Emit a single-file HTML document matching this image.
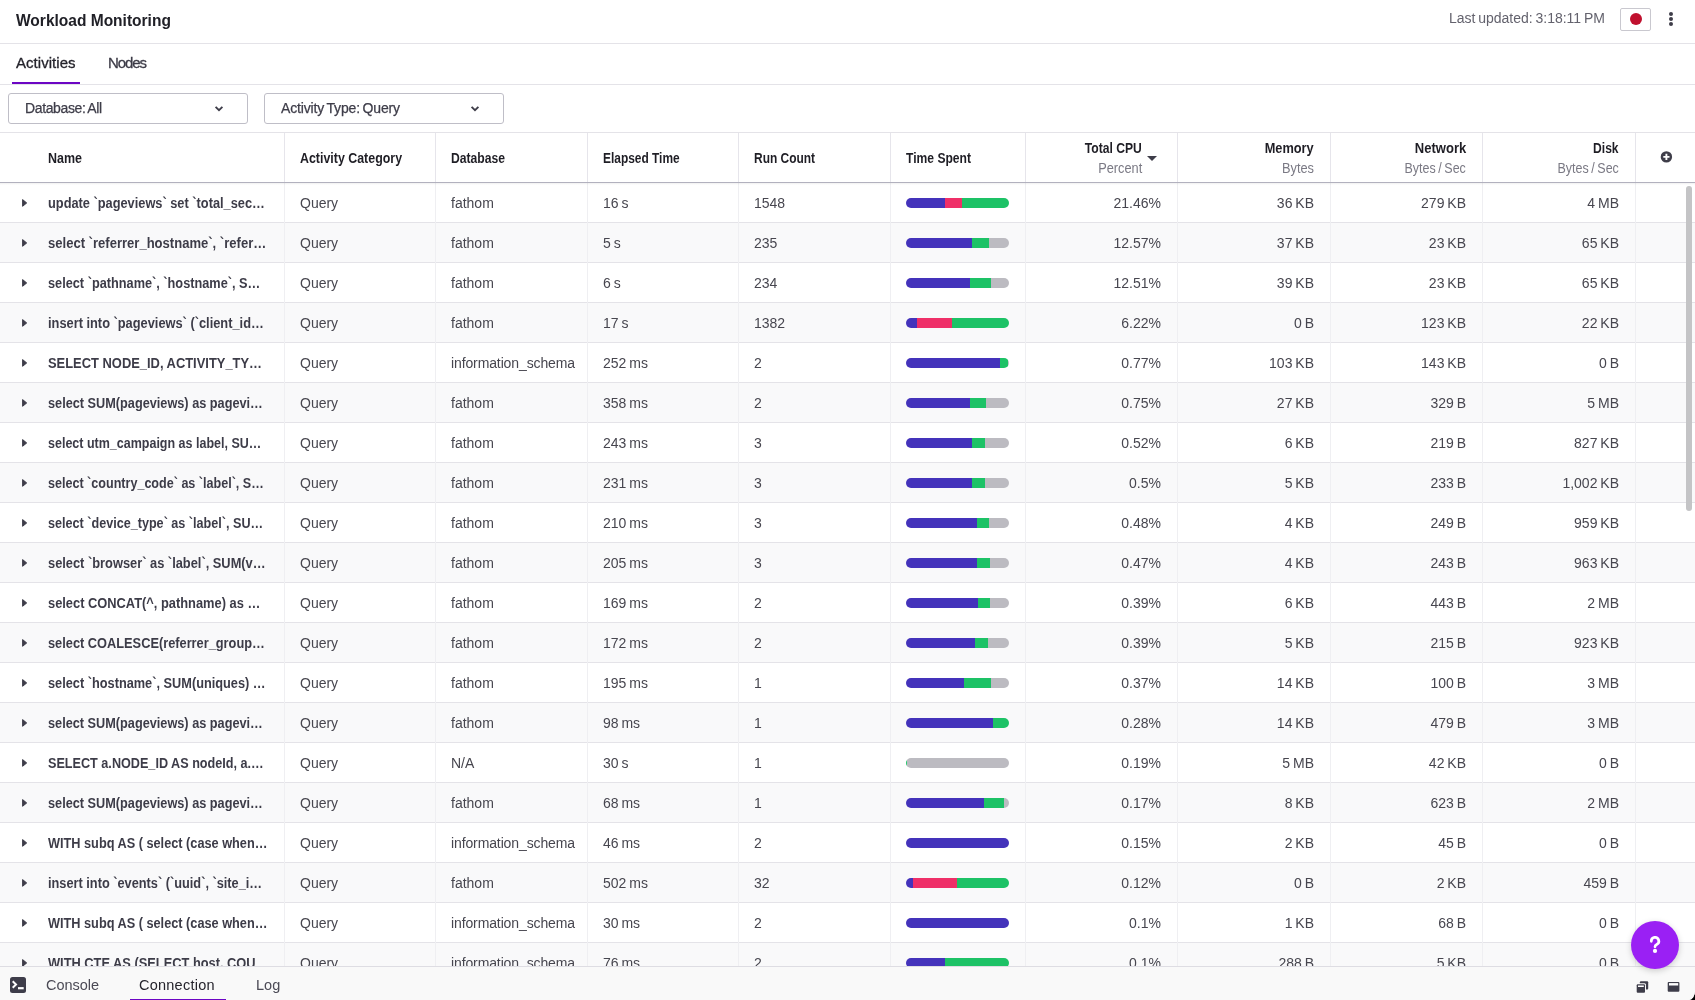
<!DOCTYPE html>
<html><head><meta charset="utf-8"><title>Workload Monitoring</title>
<style>
html,body{margin:0;padding:0}
body{width:1695px;height:1000px;overflow:hidden;background:#000;position:relative;font-family:"Liberation Sans",sans-serif}
.t{position:absolute;white-space:nowrap}
.d{word-spacing:-1px}
.row{position:absolute;left:0;width:1695px;height:40px}
.hl{position:absolute;left:0;width:1695px;height:1px;background:#e4e3e8}
.vl{position:absolute;width:1px}
.arr{position:absolute;left:22px}
.bar{position:absolute;left:906px;width:103px;height:10px;border-radius:5px;overflow:hidden}
#tbl{position:absolute;left:0;top:0;width:1695px;height:966px;overflow:hidden}
</style></head><body>
<div id="root" style="position:absolute;left:0;top:0;width:1695px;height:1000px;overflow:hidden;will-change:transform;border-bottom-right-radius:6px 9px;background:#fff">
<div style="position:absolute;left:0;top:43px;width:1695px;height:1px;background:#e4e3e8"></div>
<div style="position:absolute;left:1620px;top:8px;width:29px;height:21px;border:1px solid #c9c8cf;border-radius:2px"></div>
<div style="position:absolute;left:1629.5px;top:13px;width:12px;height:12px;border-radius:50%;background:#c0102e"></div>
<div style="position:absolute;left:1669px;top:12px;width:4px;height:4px;border-radius:50%;background:#3e3d49"></div>
<div style="position:absolute;left:1669px;top:17px;width:4px;height:4px;border-radius:50%;background:#3e3d49"></div>
<div style="position:absolute;left:1669px;top:22px;width:4px;height:4px;border-radius:50%;background:#3e3d49"></div>
<div style="position:absolute;left:0;top:84px;width:1695px;height:1px;background:#e4e3e8"></div>
<div style="position:absolute;left:12px;top:82px;width:68px;height:2px;background:#6c06c4"></div>
<div style="position:absolute;left:8px;top:93px;width:238px;height:29px;border:1px solid #bfbec7;border-radius:3px"></div>
<div style="position:absolute;left:264px;top:93px;width:238px;height:29px;border:1px solid #bfbec7;border-radius:3px"></div>
<svg style="position:absolute;left:214px;top:104px" width="10" height="8" viewBox="0 0 10 8"><path d="M1.6 2.9 L5 6.1 L8.4 2.9" fill="none" stroke="#3e3d49" stroke-width="1.9"/></svg>
<svg style="position:absolute;left:470px;top:104px" width="10" height="8" viewBox="0 0 10 8"><path d="M1.6 2.9 L5 6.1 L8.4 2.9" fill="none" stroke="#3e3d49" stroke-width="1.9"/></svg>
<div id="tbl">
<div style="position:absolute;left:0;top:132px;width:1695px;height:1px;background:#e4e3e8"></div>
<div class="row" style="top:182px;background:#ffffff"></div><div class="row" style="top:222px;background:#f9f9fa"></div><div class="row" style="top:262px;background:#ffffff"></div><div class="row" style="top:302px;background:#f9f9fa"></div><div class="row" style="top:342px;background:#ffffff"></div><div class="row" style="top:382px;background:#f9f9fa"></div><div class="row" style="top:422px;background:#ffffff"></div><div class="row" style="top:462px;background:#f9f9fa"></div><div class="row" style="top:502px;background:#ffffff"></div><div class="row" style="top:542px;background:#f9f9fa"></div><div class="row" style="top:582px;background:#ffffff"></div><div class="row" style="top:622px;background:#f9f9fa"></div><div class="row" style="top:662px;background:#ffffff"></div><div class="row" style="top:702px;background:#f9f9fa"></div><div class="row" style="top:742px;background:#ffffff"></div><div class="row" style="top:782px;background:#f9f9fa"></div><div class="row" style="top:822px;background:#ffffff"></div><div class="row" style="top:862px;background:#f9f9fa"></div><div class="row" style="top:902px;background:#ffffff"></div><div class="row" style="top:942px;background:#f9f9fa"></div><div class="hl" style="top:222px"></div><div class="hl" style="top:262px"></div><div class="hl" style="top:302px"></div><div class="hl" style="top:342px"></div><div class="hl" style="top:382px"></div><div class="hl" style="top:422px"></div><div class="hl" style="top:462px"></div><div class="hl" style="top:502px"></div><div class="hl" style="top:542px"></div><div class="hl" style="top:582px"></div><div class="hl" style="top:622px"></div><div class="hl" style="top:662px"></div><div class="hl" style="top:702px"></div><div class="hl" style="top:742px"></div><div class="hl" style="top:782px"></div><div class="hl" style="top:822px"></div><div class="hl" style="top:862px"></div><div class="hl" style="top:902px"></div><div class="hl" style="top:942px"></div><div class="hl" style="top:982px"></div><div class="vl" style="left:284px;top:183px;height:783px;background:#efeff2"></div><div class="vl" style="left:284px;top:133px;height:49px;background:#e6e5eb"></div><div class="vl" style="left:435px;top:183px;height:783px;background:#efeff2"></div><div class="vl" style="left:435px;top:133px;height:49px;background:#e6e5eb"></div><div class="vl" style="left:587px;top:183px;height:783px;background:#efeff2"></div><div class="vl" style="left:587px;top:133px;height:49px;background:#e6e5eb"></div><div class="vl" style="left:738px;top:183px;height:783px;background:#efeff2"></div><div class="vl" style="left:738px;top:133px;height:49px;background:#e6e5eb"></div><div class="vl" style="left:890px;top:183px;height:783px;background:#efeff2"></div><div class="vl" style="left:890px;top:133px;height:49px;background:#e6e5eb"></div><div class="vl" style="left:1025px;top:183px;height:783px;background:#efeff2"></div><div class="vl" style="left:1025px;top:133px;height:49px;background:#e6e5eb"></div><div class="vl" style="left:1177px;top:183px;height:783px;background:#efeff2"></div><div class="vl" style="left:1177px;top:133px;height:49px;background:#e6e5eb"></div><div class="vl" style="left:1330px;top:183px;height:783px;background:#efeff2"></div><div class="vl" style="left:1330px;top:133px;height:49px;background:#e6e5eb"></div><div class="vl" style="left:1482px;top:183px;height:783px;background:#efeff2"></div><div class="vl" style="left:1482px;top:133px;height:49px;background:#e6e5eb"></div><div class="vl" style="left:1635px;top:183px;height:783px;background:#efeff2"></div><div class="vl" style="left:1635px;top:133px;height:49px;background:#e6e5eb"></div><svg class="arr" style="top:199px" width="6" height="8" viewBox="0 0 6 8"><path d="M0.6 0.6 L4.7 3.95 L0.6 7.3 Z" fill="#3e3d49" stroke="#3e3d49" stroke-width="1" stroke-linejoin="round"/></svg><div class="bar" style="top:198px"><div style="position:absolute;left:0px;top:0;width:39px;height:10px;background:#4433bb"></div><div style="position:absolute;left:39px;top:0;width:17px;height:10px;background:#ef2f68"></div><div style="position:absolute;left:56px;top:0;width:47px;height:10px;background:#1dc266"></div></div><svg class="arr" style="top:239px" width="6" height="8" viewBox="0 0 6 8"><path d="M0.6 0.6 L4.7 3.95 L0.6 7.3 Z" fill="#3e3d49" stroke="#3e3d49" stroke-width="1" stroke-linejoin="round"/></svg><div class="bar" style="top:238px"><div style="position:absolute;left:0px;top:0;width:66px;height:10px;background:#4433bb"></div><div style="position:absolute;left:66px;top:0;width:17px;height:10px;background:#1dc266"></div><div style="position:absolute;left:83px;top:0;width:20px;height:10px;background:#bcbbc1"></div></div><svg class="arr" style="top:279px" width="6" height="8" viewBox="0 0 6 8"><path d="M0.6 0.6 L4.7 3.95 L0.6 7.3 Z" fill="#3e3d49" stroke="#3e3d49" stroke-width="1" stroke-linejoin="round"/></svg><div class="bar" style="top:278px"><div style="position:absolute;left:0px;top:0;width:64px;height:10px;background:#4433bb"></div><div style="position:absolute;left:64px;top:0;width:21px;height:10px;background:#1dc266"></div><div style="position:absolute;left:85px;top:0;width:18px;height:10px;background:#bcbbc1"></div></div><svg class="arr" style="top:319px" width="6" height="8" viewBox="0 0 6 8"><path d="M0.6 0.6 L4.7 3.95 L0.6 7.3 Z" fill="#3e3d49" stroke="#3e3d49" stroke-width="1" stroke-linejoin="round"/></svg><div class="bar" style="top:318px"><div style="position:absolute;left:0px;top:0;width:11px;height:10px;background:#4433bb"></div><div style="position:absolute;left:11px;top:0;width:35px;height:10px;background:#ef2f68"></div><div style="position:absolute;left:46px;top:0;width:57px;height:10px;background:#1dc266"></div></div><svg class="arr" style="top:359px" width="6" height="8" viewBox="0 0 6 8"><path d="M0.6 0.6 L4.7 3.95 L0.6 7.3 Z" fill="#3e3d49" stroke="#3e3d49" stroke-width="1" stroke-linejoin="round"/></svg><div class="bar" style="top:358px"><div style="position:absolute;left:0px;top:0;width:94px;height:10px;background:#4433bb"></div><div style="position:absolute;left:94px;top:0;width:8px;height:10px;background:#1dc266"></div><div style="position:absolute;left:102px;top:0;width:1px;height:10px;background:#bcbbc1"></div></div><svg class="arr" style="top:399px" width="6" height="8" viewBox="0 0 6 8"><path d="M0.6 0.6 L4.7 3.95 L0.6 7.3 Z" fill="#3e3d49" stroke="#3e3d49" stroke-width="1" stroke-linejoin="round"/></svg><div class="bar" style="top:398px"><div style="position:absolute;left:0px;top:0;width:64px;height:10px;background:#4433bb"></div><div style="position:absolute;left:64px;top:0;width:16px;height:10px;background:#1dc266"></div><div style="position:absolute;left:80px;top:0;width:23px;height:10px;background:#bcbbc1"></div></div><svg class="arr" style="top:439px" width="6" height="8" viewBox="0 0 6 8"><path d="M0.6 0.6 L4.7 3.95 L0.6 7.3 Z" fill="#3e3d49" stroke="#3e3d49" stroke-width="1" stroke-linejoin="round"/></svg><div class="bar" style="top:438px"><div style="position:absolute;left:0px;top:0;width:66px;height:10px;background:#4433bb"></div><div style="position:absolute;left:66px;top:0;width:13px;height:10px;background:#1dc266"></div><div style="position:absolute;left:79px;top:0;width:24px;height:10px;background:#bcbbc1"></div></div><svg class="arr" style="top:479px" width="6" height="8" viewBox="0 0 6 8"><path d="M0.6 0.6 L4.7 3.95 L0.6 7.3 Z" fill="#3e3d49" stroke="#3e3d49" stroke-width="1" stroke-linejoin="round"/></svg><div class="bar" style="top:478px"><div style="position:absolute;left:0px;top:0;width:66px;height:10px;background:#4433bb"></div><div style="position:absolute;left:66px;top:0;width:13px;height:10px;background:#1dc266"></div><div style="position:absolute;left:79px;top:0;width:24px;height:10px;background:#bcbbc1"></div></div><svg class="arr" style="top:519px" width="6" height="8" viewBox="0 0 6 8"><path d="M0.6 0.6 L4.7 3.95 L0.6 7.3 Z" fill="#3e3d49" stroke="#3e3d49" stroke-width="1" stroke-linejoin="round"/></svg><div class="bar" style="top:518px"><div style="position:absolute;left:0px;top:0;width:71px;height:10px;background:#4433bb"></div><div style="position:absolute;left:71px;top:0;width:12px;height:10px;background:#1dc266"></div><div style="position:absolute;left:83px;top:0;width:20px;height:10px;background:#bcbbc1"></div></div><svg class="arr" style="top:559px" width="6" height="8" viewBox="0 0 6 8"><path d="M0.6 0.6 L4.7 3.95 L0.6 7.3 Z" fill="#3e3d49" stroke="#3e3d49" stroke-width="1" stroke-linejoin="round"/></svg><div class="bar" style="top:558px"><div style="position:absolute;left:0px;top:0;width:71px;height:10px;background:#4433bb"></div><div style="position:absolute;left:71px;top:0;width:13px;height:10px;background:#1dc266"></div><div style="position:absolute;left:84px;top:0;width:19px;height:10px;background:#bcbbc1"></div></div><svg class="arr" style="top:599px" width="6" height="8" viewBox="0 0 6 8"><path d="M0.6 0.6 L4.7 3.95 L0.6 7.3 Z" fill="#3e3d49" stroke="#3e3d49" stroke-width="1" stroke-linejoin="round"/></svg><div class="bar" style="top:598px"><div style="position:absolute;left:0px;top:0;width:72px;height:10px;background:#4433bb"></div><div style="position:absolute;left:72px;top:0;width:12px;height:10px;background:#1dc266"></div><div style="position:absolute;left:84px;top:0;width:19px;height:10px;background:#bcbbc1"></div></div><svg class="arr" style="top:639px" width="6" height="8" viewBox="0 0 6 8"><path d="M0.6 0.6 L4.7 3.95 L0.6 7.3 Z" fill="#3e3d49" stroke="#3e3d49" stroke-width="1" stroke-linejoin="round"/></svg><div class="bar" style="top:638px"><div style="position:absolute;left:0px;top:0;width:69px;height:10px;background:#4433bb"></div><div style="position:absolute;left:69px;top:0;width:13px;height:10px;background:#1dc266"></div><div style="position:absolute;left:82px;top:0;width:21px;height:10px;background:#bcbbc1"></div></div><svg class="arr" style="top:679px" width="6" height="8" viewBox="0 0 6 8"><path d="M0.6 0.6 L4.7 3.95 L0.6 7.3 Z" fill="#3e3d49" stroke="#3e3d49" stroke-width="1" stroke-linejoin="round"/></svg><div class="bar" style="top:678px"><div style="position:absolute;left:0px;top:0;width:58px;height:10px;background:#4433bb"></div><div style="position:absolute;left:58px;top:0;width:27px;height:10px;background:#1dc266"></div><div style="position:absolute;left:85px;top:0;width:18px;height:10px;background:#bcbbc1"></div></div><svg class="arr" style="top:719px" width="6" height="8" viewBox="0 0 6 8"><path d="M0.6 0.6 L4.7 3.95 L0.6 7.3 Z" fill="#3e3d49" stroke="#3e3d49" stroke-width="1" stroke-linejoin="round"/></svg><div class="bar" style="top:718px"><div style="position:absolute;left:0px;top:0;width:87px;height:10px;background:#4433bb"></div><div style="position:absolute;left:87px;top:0;width:16px;height:10px;background:#1dc266"></div></div><svg class="arr" style="top:759px" width="6" height="8" viewBox="0 0 6 8"><path d="M0.6 0.6 L4.7 3.95 L0.6 7.3 Z" fill="#3e3d49" stroke="#3e3d49" stroke-width="1" stroke-linejoin="round"/></svg><div class="bar" style="top:758px"><div style="position:absolute;left:0px;top:0;width:1px;height:10px;background:#1dc266"></div><div style="position:absolute;left:1px;top:0;width:102px;height:10px;background:#bcbbc1"></div></div><svg class="arr" style="top:799px" width="6" height="8" viewBox="0 0 6 8"><path d="M0.6 0.6 L4.7 3.95 L0.6 7.3 Z" fill="#3e3d49" stroke="#3e3d49" stroke-width="1" stroke-linejoin="round"/></svg><div class="bar" style="top:798px"><div style="position:absolute;left:0px;top:0;width:78px;height:10px;background:#4433bb"></div><div style="position:absolute;left:78px;top:0;width:20px;height:10px;background:#1dc266"></div><div style="position:absolute;left:98px;top:0;width:5px;height:10px;background:#bcbbc1"></div></div><svg class="arr" style="top:839px" width="6" height="8" viewBox="0 0 6 8"><path d="M0.6 0.6 L4.7 3.95 L0.6 7.3 Z" fill="#3e3d49" stroke="#3e3d49" stroke-width="1" stroke-linejoin="round"/></svg><div class="bar" style="top:838px"><div style="position:absolute;left:0px;top:0;width:103px;height:10px;background:#4433bb"></div></div><svg class="arr" style="top:879px" width="6" height="8" viewBox="0 0 6 8"><path d="M0.6 0.6 L4.7 3.95 L0.6 7.3 Z" fill="#3e3d49" stroke="#3e3d49" stroke-width="1" stroke-linejoin="round"/></svg><div class="bar" style="top:878px"><div style="position:absolute;left:0px;top:0;width:7px;height:10px;background:#4433bb"></div><div style="position:absolute;left:7px;top:0;width:44px;height:10px;background:#ef2f68"></div><div style="position:absolute;left:51px;top:0;width:52px;height:10px;background:#1dc266"></div></div><svg class="arr" style="top:919px" width="6" height="8" viewBox="0 0 6 8"><path d="M0.6 0.6 L4.7 3.95 L0.6 7.3 Z" fill="#3e3d49" stroke="#3e3d49" stroke-width="1" stroke-linejoin="round"/></svg><div class="bar" style="top:918px"><div style="position:absolute;left:0px;top:0;width:103px;height:10px;background:#4433bb"></div></div><svg class="arr" style="top:959px" width="6" height="8" viewBox="0 0 6 8"><path d="M0.6 0.6 L4.7 3.95 L0.6 7.3 Z" fill="#3e3d49" stroke="#3e3d49" stroke-width="1" stroke-linejoin="round"/></svg><div class="bar" style="top:958px"><div style="position:absolute;left:0px;top:0;width:39px;height:10px;background:#4433bb"></div><div style="position:absolute;left:39px;top:0;width:64px;height:10px;background:#1dc266"></div></div>
<div class="t" style="top:196.15px;font-size:14px;line-height:14px;color:#3d3c48;font-weight:bold;transform:scaleX(0.9137);transform-origin:0 0;left:48px;">update `pageviews` set `total_sec…</div>
<div class="t d" style="top:196.15px;font-size:14px;line-height:14px;color:#47464f;left:300px;">Query</div>
<div class="t d" style="top:196.15px;font-size:14px;line-height:14px;color:#47464f;left:451px;">fathom</div>
<div class="t d" style="top:196.15px;font-size:14px;line-height:14px;color:#47464f;left:603px;">16 s</div>
<div class="t d" style="top:196.15px;font-size:14px;line-height:14px;color:#47464f;left:754px;">1548</div>
<div class="t d" style="top:196.15px;font-size:14px;line-height:14px;color:#47464f;right:534.00px;text-align:right;">21.46%</div>
<div class="t d" style="top:196.15px;font-size:14px;line-height:14px;color:#47464f;right:381.00px;text-align:right;">36 KB</div>
<div class="t d" style="top:196.15px;font-size:14px;line-height:14px;color:#47464f;right:229.00px;text-align:right;">279 KB</div>
<div class="t d" style="top:196.15px;font-size:14px;line-height:14px;color:#47464f;right:76.00px;text-align:right;">4 MB</div>
<div class="t" style="top:236.15px;font-size:14px;line-height:14px;color:#3d3c48;font-weight:bold;transform:scaleX(0.9320);transform-origin:0 0;left:48px;">select `referrer_hostname`, `refer…</div>
<div class="t d" style="top:236.15px;font-size:14px;line-height:14px;color:#47464f;left:300px;">Query</div>
<div class="t d" style="top:236.15px;font-size:14px;line-height:14px;color:#47464f;left:451px;">fathom</div>
<div class="t d" style="top:236.15px;font-size:14px;line-height:14px;color:#47464f;left:603px;">5 s</div>
<div class="t d" style="top:236.15px;font-size:14px;line-height:14px;color:#47464f;left:754px;">235</div>
<div class="t d" style="top:236.15px;font-size:14px;line-height:14px;color:#47464f;right:534.00px;text-align:right;">12.57%</div>
<div class="t d" style="top:236.15px;font-size:14px;line-height:14px;color:#47464f;right:381.00px;text-align:right;">37 KB</div>
<div class="t d" style="top:236.15px;font-size:14px;line-height:14px;color:#47464f;right:229.00px;text-align:right;">23 KB</div>
<div class="t d" style="top:236.15px;font-size:14px;line-height:14px;color:#47464f;right:76.00px;text-align:right;">65 KB</div>
<div class="t" style="top:276.15px;font-size:14px;line-height:14px;color:#3d3c48;font-weight:bold;transform:scaleX(0.9096);transform-origin:0 0;left:48px;">select `pathname`, `hostname`, S…</div>
<div class="t d" style="top:276.15px;font-size:14px;line-height:14px;color:#47464f;left:300px;">Query</div>
<div class="t d" style="top:276.15px;font-size:14px;line-height:14px;color:#47464f;left:451px;">fathom</div>
<div class="t d" style="top:276.15px;font-size:14px;line-height:14px;color:#47464f;left:603px;">6 s</div>
<div class="t d" style="top:276.15px;font-size:14px;line-height:14px;color:#47464f;left:754px;">234</div>
<div class="t d" style="top:276.15px;font-size:14px;line-height:14px;color:#47464f;right:534.00px;text-align:right;">12.51%</div>
<div class="t d" style="top:276.15px;font-size:14px;line-height:14px;color:#47464f;right:381.00px;text-align:right;">39 KB</div>
<div class="t d" style="top:276.15px;font-size:14px;line-height:14px;color:#47464f;right:229.00px;text-align:right;">23 KB</div>
<div class="t d" style="top:276.15px;font-size:14px;line-height:14px;color:#47464f;right:76.00px;text-align:right;">65 KB</div>
<div class="t" style="top:316.15px;font-size:14px;line-height:14px;color:#3d3c48;font-weight:bold;transform:scaleX(0.9156);transform-origin:0 0;left:48px;">insert into `pageviews` (`client_id…</div>
<div class="t d" style="top:316.15px;font-size:14px;line-height:14px;color:#47464f;left:300px;">Query</div>
<div class="t d" style="top:316.15px;font-size:14px;line-height:14px;color:#47464f;left:451px;">fathom</div>
<div class="t d" style="top:316.15px;font-size:14px;line-height:14px;color:#47464f;left:603px;">17 s</div>
<div class="t d" style="top:316.15px;font-size:14px;line-height:14px;color:#47464f;left:754px;">1382</div>
<div class="t d" style="top:316.15px;font-size:14px;line-height:14px;color:#47464f;right:534.00px;text-align:right;">6.22%</div>
<div class="t d" style="top:316.15px;font-size:14px;line-height:14px;color:#47464f;right:381.00px;text-align:right;">0 B</div>
<div class="t d" style="top:316.15px;font-size:14px;line-height:14px;color:#47464f;right:229.00px;text-align:right;">123 KB</div>
<div class="t d" style="top:316.15px;font-size:14px;line-height:14px;color:#47464f;right:76.00px;text-align:right;">22 KB</div>
<div class="t" style="top:356.15px;font-size:14px;line-height:14px;color:#3d3c48;font-weight:bold;transform:scaleX(0.9221);transform-origin:0 0;left:48px;">SELECT NODE_ID, ACTIVITY_TY…</div>
<div class="t d" style="top:356.15px;font-size:14px;line-height:14px;color:#47464f;left:300px;">Query</div>
<div class="t d" style="top:356.15px;font-size:14px;line-height:14px;color:#47464f;letter-spacing:-0.118px;left:451px;">information_schema</div>
<div class="t d" style="top:356.15px;font-size:14px;line-height:14px;color:#47464f;left:603px;">252 ms</div>
<div class="t d" style="top:356.15px;font-size:14px;line-height:14px;color:#47464f;left:754px;">2</div>
<div class="t d" style="top:356.15px;font-size:14px;line-height:14px;color:#47464f;right:534.00px;text-align:right;">0.77%</div>
<div class="t d" style="top:356.15px;font-size:14px;line-height:14px;color:#47464f;right:381.00px;text-align:right;">103 KB</div>
<div class="t d" style="top:356.15px;font-size:14px;line-height:14px;color:#47464f;right:229.00px;text-align:right;">143 KB</div>
<div class="t d" style="top:356.15px;font-size:14px;line-height:14px;color:#47464f;right:76.00px;text-align:right;">0 B</div>
<div class="t" style="top:396.15px;font-size:14px;line-height:14px;color:#3d3c48;font-weight:bold;transform:scaleX(0.9081);transform-origin:0 0;left:48px;">select SUM(pageviews) as pagevi…</div>
<div class="t d" style="top:396.15px;font-size:14px;line-height:14px;color:#47464f;left:300px;">Query</div>
<div class="t d" style="top:396.15px;font-size:14px;line-height:14px;color:#47464f;left:451px;">fathom</div>
<div class="t d" style="top:396.15px;font-size:14px;line-height:14px;color:#47464f;left:603px;">358 ms</div>
<div class="t d" style="top:396.15px;font-size:14px;line-height:14px;color:#47464f;left:754px;">2</div>
<div class="t d" style="top:396.15px;font-size:14px;line-height:14px;color:#47464f;right:534.00px;text-align:right;">0.75%</div>
<div class="t d" style="top:396.15px;font-size:14px;line-height:14px;color:#47464f;right:381.00px;text-align:right;">27 KB</div>
<div class="t d" style="top:396.15px;font-size:14px;line-height:14px;color:#47464f;right:229.00px;text-align:right;">329 B</div>
<div class="t d" style="top:396.15px;font-size:14px;line-height:14px;color:#47464f;right:76.00px;text-align:right;">5 MB</div>
<div class="t" style="top:436.15px;font-size:14px;line-height:14px;color:#3d3c48;font-weight:bold;transform:scaleX(0.8928);transform-origin:0 0;left:48px;">select utm_campaign as label, SU…</div>
<div class="t d" style="top:436.15px;font-size:14px;line-height:14px;color:#47464f;left:300px;">Query</div>
<div class="t d" style="top:436.15px;font-size:14px;line-height:14px;color:#47464f;left:451px;">fathom</div>
<div class="t d" style="top:436.15px;font-size:14px;line-height:14px;color:#47464f;left:603px;">243 ms</div>
<div class="t d" style="top:436.15px;font-size:14px;line-height:14px;color:#47464f;left:754px;">3</div>
<div class="t d" style="top:436.15px;font-size:14px;line-height:14px;color:#47464f;right:534.00px;text-align:right;">0.52%</div>
<div class="t d" style="top:436.15px;font-size:14px;line-height:14px;color:#47464f;right:381.00px;text-align:right;">6 KB</div>
<div class="t d" style="top:436.15px;font-size:14px;line-height:14px;color:#47464f;right:229.00px;text-align:right;">219 B</div>
<div class="t d" style="top:436.15px;font-size:14px;line-height:14px;color:#47464f;right:76.00px;text-align:right;">827 KB</div>
<div class="t" style="top:476.15px;font-size:14px;line-height:14px;color:#3d3c48;font-weight:bold;transform:scaleX(0.8976);transform-origin:0 0;left:48px;">select `country_code` as `label`, S…</div>
<div class="t d" style="top:476.15px;font-size:14px;line-height:14px;color:#47464f;left:300px;">Query</div>
<div class="t d" style="top:476.15px;font-size:14px;line-height:14px;color:#47464f;left:451px;">fathom</div>
<div class="t d" style="top:476.15px;font-size:14px;line-height:14px;color:#47464f;left:603px;">231 ms</div>
<div class="t d" style="top:476.15px;font-size:14px;line-height:14px;color:#47464f;left:754px;">3</div>
<div class="t d" style="top:476.15px;font-size:14px;line-height:14px;color:#47464f;right:534.00px;text-align:right;">0.5%</div>
<div class="t d" style="top:476.15px;font-size:14px;line-height:14px;color:#47464f;right:381.00px;text-align:right;">5 KB</div>
<div class="t d" style="top:476.15px;font-size:14px;line-height:14px;color:#47464f;right:229.00px;text-align:right;">233 B</div>
<div class="t d" style="top:476.15px;font-size:14px;line-height:14px;color:#47464f;right:76.00px;text-align:right;">1,002 KB</div>
<div class="t" style="top:516.15px;font-size:14px;line-height:14px;color:#3d3c48;font-weight:bold;transform:scaleX(0.9005);transform-origin:0 0;left:48px;">select `device_type` as `label`, SU…</div>
<div class="t d" style="top:516.15px;font-size:14px;line-height:14px;color:#47464f;left:300px;">Query</div>
<div class="t d" style="top:516.15px;font-size:14px;line-height:14px;color:#47464f;left:451px;">fathom</div>
<div class="t d" style="top:516.15px;font-size:14px;line-height:14px;color:#47464f;left:603px;">210 ms</div>
<div class="t d" style="top:516.15px;font-size:14px;line-height:14px;color:#47464f;left:754px;">3</div>
<div class="t d" style="top:516.15px;font-size:14px;line-height:14px;color:#47464f;right:534.00px;text-align:right;">0.48%</div>
<div class="t d" style="top:516.15px;font-size:14px;line-height:14px;color:#47464f;right:381.00px;text-align:right;">4 KB</div>
<div class="t d" style="top:516.15px;font-size:14px;line-height:14px;color:#47464f;right:229.00px;text-align:right;">249 B</div>
<div class="t d" style="top:516.15px;font-size:14px;line-height:14px;color:#47464f;right:76.00px;text-align:right;">959 KB</div>
<div class="t" style="top:556.15px;font-size:14px;line-height:14px;color:#3d3c48;font-weight:bold;transform:scaleX(0.9169);transform-origin:0 0;left:48px;">select `browser` as `label`, SUM(v…</div>
<div class="t d" style="top:556.15px;font-size:14px;line-height:14px;color:#47464f;left:300px;">Query</div>
<div class="t d" style="top:556.15px;font-size:14px;line-height:14px;color:#47464f;left:451px;">fathom</div>
<div class="t d" style="top:556.15px;font-size:14px;line-height:14px;color:#47464f;left:603px;">205 ms</div>
<div class="t d" style="top:556.15px;font-size:14px;line-height:14px;color:#47464f;left:754px;">3</div>
<div class="t d" style="top:556.15px;font-size:14px;line-height:14px;color:#47464f;right:534.00px;text-align:right;">0.47%</div>
<div class="t d" style="top:556.15px;font-size:14px;line-height:14px;color:#47464f;right:381.00px;text-align:right;">4 KB</div>
<div class="t d" style="top:556.15px;font-size:14px;line-height:14px;color:#47464f;right:229.00px;text-align:right;">243 B</div>
<div class="t d" style="top:556.15px;font-size:14px;line-height:14px;color:#47464f;right:76.00px;text-align:right;">963 KB</div>
<div class="t" style="top:596.15px;font-size:14px;line-height:14px;color:#3d3c48;font-weight:bold;transform:scaleX(0.9182);transform-origin:0 0;left:48px;">select CONCAT(^, pathname) as …</div>
<div class="t d" style="top:596.15px;font-size:14px;line-height:14px;color:#47464f;left:300px;">Query</div>
<div class="t d" style="top:596.15px;font-size:14px;line-height:14px;color:#47464f;left:451px;">fathom</div>
<div class="t d" style="top:596.15px;font-size:14px;line-height:14px;color:#47464f;left:603px;">169 ms</div>
<div class="t d" style="top:596.15px;font-size:14px;line-height:14px;color:#47464f;left:754px;">2</div>
<div class="t d" style="top:596.15px;font-size:14px;line-height:14px;color:#47464f;right:534.00px;text-align:right;">0.39%</div>
<div class="t d" style="top:596.15px;font-size:14px;line-height:14px;color:#47464f;right:381.00px;text-align:right;">6 KB</div>
<div class="t d" style="top:596.15px;font-size:14px;line-height:14px;color:#47464f;right:229.00px;text-align:right;">443 B</div>
<div class="t d" style="top:596.15px;font-size:14px;line-height:14px;color:#47464f;right:76.00px;text-align:right;">2 MB</div>
<div class="t" style="top:636.15px;font-size:14px;line-height:14px;color:#3d3c48;font-weight:bold;transform:scaleX(0.9138);transform-origin:0 0;left:48px;">select COALESCE(referrer_group…</div>
<div class="t d" style="top:636.15px;font-size:14px;line-height:14px;color:#47464f;left:300px;">Query</div>
<div class="t d" style="top:636.15px;font-size:14px;line-height:14px;color:#47464f;left:451px;">fathom</div>
<div class="t d" style="top:636.15px;font-size:14px;line-height:14px;color:#47464f;left:603px;">172 ms</div>
<div class="t d" style="top:636.15px;font-size:14px;line-height:14px;color:#47464f;left:754px;">2</div>
<div class="t d" style="top:636.15px;font-size:14px;line-height:14px;color:#47464f;right:534.00px;text-align:right;">0.39%</div>
<div class="t d" style="top:636.15px;font-size:14px;line-height:14px;color:#47464f;right:381.00px;text-align:right;">5 KB</div>
<div class="t d" style="top:636.15px;font-size:14px;line-height:14px;color:#47464f;right:229.00px;text-align:right;">215 B</div>
<div class="t d" style="top:636.15px;font-size:14px;line-height:14px;color:#47464f;right:76.00px;text-align:right;">923 KB</div>
<div class="t" style="top:676.15px;font-size:14px;line-height:14px;color:#3d3c48;font-weight:bold;transform:scaleX(0.9112);transform-origin:0 0;left:48px;">select `hostname`, SUM(uniques) …</div>
<div class="t d" style="top:676.15px;font-size:14px;line-height:14px;color:#47464f;left:300px;">Query</div>
<div class="t d" style="top:676.15px;font-size:14px;line-height:14px;color:#47464f;left:451px;">fathom</div>
<div class="t d" style="top:676.15px;font-size:14px;line-height:14px;color:#47464f;left:603px;">195 ms</div>
<div class="t d" style="top:676.15px;font-size:14px;line-height:14px;color:#47464f;left:754px;">1</div>
<div class="t d" style="top:676.15px;font-size:14px;line-height:14px;color:#47464f;right:534.00px;text-align:right;">0.37%</div>
<div class="t d" style="top:676.15px;font-size:14px;line-height:14px;color:#47464f;right:381.00px;text-align:right;">14 KB</div>
<div class="t d" style="top:676.15px;font-size:14px;line-height:14px;color:#47464f;right:229.00px;text-align:right;">100 B</div>
<div class="t d" style="top:676.15px;font-size:14px;line-height:14px;color:#47464f;right:76.00px;text-align:right;">3 MB</div>
<div class="t" style="top:716.15px;font-size:14px;line-height:14px;color:#3d3c48;font-weight:bold;transform:scaleX(0.9081);transform-origin:0 0;left:48px;">select SUM(pageviews) as pagevi…</div>
<div class="t d" style="top:716.15px;font-size:14px;line-height:14px;color:#47464f;left:300px;">Query</div>
<div class="t d" style="top:716.15px;font-size:14px;line-height:14px;color:#47464f;left:451px;">fathom</div>
<div class="t d" style="top:716.15px;font-size:14px;line-height:14px;color:#47464f;left:603px;">98 ms</div>
<div class="t d" style="top:716.15px;font-size:14px;line-height:14px;color:#47464f;left:754px;">1</div>
<div class="t d" style="top:716.15px;font-size:14px;line-height:14px;color:#47464f;right:534.00px;text-align:right;">0.28%</div>
<div class="t d" style="top:716.15px;font-size:14px;line-height:14px;color:#47464f;right:381.00px;text-align:right;">14 KB</div>
<div class="t d" style="top:716.15px;font-size:14px;line-height:14px;color:#47464f;right:229.00px;text-align:right;">479 B</div>
<div class="t d" style="top:716.15px;font-size:14px;line-height:14px;color:#47464f;right:76.00px;text-align:right;">3 MB</div>
<div class="t" style="top:756.15px;font-size:14px;line-height:14px;color:#3d3c48;font-weight:bold;transform:scaleX(0.9023);transform-origin:0 0;left:48px;">SELECT a.NODE_ID AS nodeId, a.…</div>
<div class="t d" style="top:756.15px;font-size:14px;line-height:14px;color:#47464f;left:300px;">Query</div>
<div class="t d" style="top:756.15px;font-size:14px;line-height:14px;color:#47464f;left:451px;">N/A</div>
<div class="t d" style="top:756.15px;font-size:14px;line-height:14px;color:#47464f;left:603px;">30 s</div>
<div class="t d" style="top:756.15px;font-size:14px;line-height:14px;color:#47464f;left:754px;">1</div>
<div class="t d" style="top:756.15px;font-size:14px;line-height:14px;color:#47464f;right:534.00px;text-align:right;">0.19%</div>
<div class="t d" style="top:756.15px;font-size:14px;line-height:14px;color:#47464f;right:381.00px;text-align:right;">5 MB</div>
<div class="t d" style="top:756.15px;font-size:14px;line-height:14px;color:#47464f;right:229.00px;text-align:right;">42 KB</div>
<div class="t d" style="top:756.15px;font-size:14px;line-height:14px;color:#47464f;right:76.00px;text-align:right;">0 B</div>
<div class="t" style="top:796.15px;font-size:14px;line-height:14px;color:#3d3c48;font-weight:bold;transform:scaleX(0.9081);transform-origin:0 0;left:48px;">select SUM(pageviews) as pagevi…</div>
<div class="t d" style="top:796.15px;font-size:14px;line-height:14px;color:#47464f;left:300px;">Query</div>
<div class="t d" style="top:796.15px;font-size:14px;line-height:14px;color:#47464f;left:451px;">fathom</div>
<div class="t d" style="top:796.15px;font-size:14px;line-height:14px;color:#47464f;left:603px;">68 ms</div>
<div class="t d" style="top:796.15px;font-size:14px;line-height:14px;color:#47464f;left:754px;">1</div>
<div class="t d" style="top:796.15px;font-size:14px;line-height:14px;color:#47464f;right:534.00px;text-align:right;">0.17%</div>
<div class="t d" style="top:796.15px;font-size:14px;line-height:14px;color:#47464f;right:381.00px;text-align:right;">8 KB</div>
<div class="t d" style="top:796.15px;font-size:14px;line-height:14px;color:#47464f;right:229.00px;text-align:right;">623 B</div>
<div class="t d" style="top:796.15px;font-size:14px;line-height:14px;color:#47464f;right:76.00px;text-align:right;">2 MB</div>
<div class="t" style="top:836.15px;font-size:14px;line-height:14px;color:#3d3c48;font-weight:bold;transform:scaleX(0.9087);transform-origin:0 0;left:48px;">WITH subq AS ( select (case when…</div>
<div class="t d" style="top:836.15px;font-size:14px;line-height:14px;color:#47464f;left:300px;">Query</div>
<div class="t d" style="top:836.15px;font-size:14px;line-height:14px;color:#47464f;letter-spacing:-0.118px;left:451px;">information_schema</div>
<div class="t d" style="top:836.15px;font-size:14px;line-height:14px;color:#47464f;left:603px;">46 ms</div>
<div class="t d" style="top:836.15px;font-size:14px;line-height:14px;color:#47464f;left:754px;">2</div>
<div class="t d" style="top:836.15px;font-size:14px;line-height:14px;color:#47464f;right:534.00px;text-align:right;">0.15%</div>
<div class="t d" style="top:836.15px;font-size:14px;line-height:14px;color:#47464f;right:381.00px;text-align:right;">2 KB</div>
<div class="t d" style="top:836.15px;font-size:14px;line-height:14px;color:#47464f;right:229.00px;text-align:right;">45 B</div>
<div class="t d" style="top:836.15px;font-size:14px;line-height:14px;color:#47464f;right:76.00px;text-align:right;">0 B</div>
<div class="t" style="top:876.15px;font-size:14px;line-height:14px;color:#3d3c48;font-weight:bold;transform:scaleX(0.9115);transform-origin:0 0;left:48px;">insert into `events` (`uuid`, `site_i…</div>
<div class="t d" style="top:876.15px;font-size:14px;line-height:14px;color:#47464f;left:300px;">Query</div>
<div class="t d" style="top:876.15px;font-size:14px;line-height:14px;color:#47464f;left:451px;">fathom</div>
<div class="t d" style="top:876.15px;font-size:14px;line-height:14px;color:#47464f;left:603px;">502 ms</div>
<div class="t d" style="top:876.15px;font-size:14px;line-height:14px;color:#47464f;left:754px;">32</div>
<div class="t d" style="top:876.15px;font-size:14px;line-height:14px;color:#47464f;right:534.00px;text-align:right;">0.12%</div>
<div class="t d" style="top:876.15px;font-size:14px;line-height:14px;color:#47464f;right:381.00px;text-align:right;">0 B</div>
<div class="t d" style="top:876.15px;font-size:14px;line-height:14px;color:#47464f;right:229.00px;text-align:right;">2 KB</div>
<div class="t d" style="top:876.15px;font-size:14px;line-height:14px;color:#47464f;right:76.00px;text-align:right;">459 B</div>
<div class="t" style="top:916.15px;font-size:14px;line-height:14px;color:#3d3c48;font-weight:bold;transform:scaleX(0.9087);transform-origin:0 0;left:48px;">WITH subq AS ( select (case when…</div>
<div class="t d" style="top:916.15px;font-size:14px;line-height:14px;color:#47464f;left:300px;">Query</div>
<div class="t d" style="top:916.15px;font-size:14px;line-height:14px;color:#47464f;letter-spacing:-0.118px;left:451px;">information_schema</div>
<div class="t d" style="top:916.15px;font-size:14px;line-height:14px;color:#47464f;left:603px;">30 ms</div>
<div class="t d" style="top:916.15px;font-size:14px;line-height:14px;color:#47464f;left:754px;">2</div>
<div class="t d" style="top:916.15px;font-size:14px;line-height:14px;color:#47464f;right:534.00px;text-align:right;">0.1%</div>
<div class="t d" style="top:916.15px;font-size:14px;line-height:14px;color:#47464f;right:381.00px;text-align:right;">1 KB</div>
<div class="t d" style="top:916.15px;font-size:14px;line-height:14px;color:#47464f;right:229.00px;text-align:right;">68 B</div>
<div class="t d" style="top:916.15px;font-size:14px;line-height:14px;color:#47464f;right:76.00px;text-align:right;">0 B</div>
<div class="t" style="top:956.15px;font-size:14px;line-height:14px;color:#3d3c48;font-weight:bold;transform:scaleX(0.9162);transform-origin:0 0;left:48px;">WITH CTE AS (SELECT host, COU</div>
<div class="t d" style="top:956.15px;font-size:14px;line-height:14px;color:#47464f;left:300px;">Query</div>
<div class="t d" style="top:956.15px;font-size:14px;line-height:14px;color:#47464f;letter-spacing:-0.118px;left:451px;">information_schema</div>
<div class="t d" style="top:956.15px;font-size:14px;line-height:14px;color:#47464f;left:603px;">76 ms</div>
<div class="t d" style="top:956.15px;font-size:14px;line-height:14px;color:#47464f;left:754px;">2</div>
<div class="t d" style="top:956.15px;font-size:14px;line-height:14px;color:#47464f;right:534.00px;text-align:right;">0.1%</div>
<div class="t d" style="top:956.15px;font-size:14px;line-height:14px;color:#47464f;right:381.00px;text-align:right;">288 B</div>
<div class="t d" style="top:956.15px;font-size:14px;line-height:14px;color:#47464f;right:229.00px;text-align:right;">5 KB</div>
<div class="t d" style="top:956.15px;font-size:14px;line-height:14px;color:#47464f;right:76.00px;text-align:right;">0 B</div>
<div style="position:absolute;left:0;top:182px;width:1695px;height:1px;background:#b2b1be"></div>
<div style="position:absolute;left:0;top:183px;width:1695px;height:2px;background:linear-gradient(rgba(0,0,0,0.06),rgba(0,0,0,0))"></div>
<div style="position:absolute;left:1147px;top:156px;width:0;height:0;border-left:5px solid transparent;border-right:5px solid transparent;border-top:5px solid #3e3d49"></div>
<svg style="position:absolute;left:1660px;top:151px" width="13" height="13" viewBox="0 0 13 13"><circle cx="6.4" cy="5.9" r="5.7" fill="#3e3d49"/><path d="M6.4 2.8v6.2M3.3 5.9h6.2" stroke="#fff" stroke-width="1.9"/></svg>
<div style="position:absolute;left:1686px;top:186px;width:6px;height:325px;border-radius:3px;background:#c4c4c6"></div>
</div>
<div class="t" style="top:13.46px;font-size:16px;line-height:16px;color:#202027;font-weight:bold;transform:scaleX(0.9698);transform-origin:0 0;left:16px;">Workload Monitoring</div>
<div class="t d" style="top:11.15px;font-size:14px;line-height:14px;color:#63626d;letter-spacing:-0.011px;right:90.01px;text-align:right;">Last updated: 3:18:11 PM</div>
<div class="t d" style="top:55.30px;font-size:15px;line-height:15px;color:#24232b;-webkit-text-stroke:0.3px #24232b;letter-spacing:0.036px;left:16px;">Activities</div>
<div class="t d" style="top:55.30px;font-size:15px;line-height:15px;color:#3c3b47;-webkit-text-stroke:0.3px #3c3b47;letter-spacing:-1.090px;left:108px;">Nodes</div>
<div class="t d" style="top:101.15px;font-size:14px;line-height:14px;color:#3e3d49;-webkit-text-stroke:0.25px #3e3d49;letter-spacing:-0.374px;left:25px;">Database: All</div>
<div class="t d" style="top:101.15px;font-size:14px;line-height:14px;color:#3e3d49;-webkit-text-stroke:0.25px #3e3d49;letter-spacing:-0.169px;left:281px;">Activity Type: Query</div>
<div class="t" style="top:151.15px;font-size:14px;line-height:14px;color:#1f1e25;font-weight:bold;transform:scaleX(0.8918);transform-origin:0 0;left:48px;">Name</div>
<div class="t" style="top:151.15px;font-size:14px;line-height:14px;color:#1f1e25;font-weight:bold;transform:scaleX(0.8862);transform-origin:0 0;left:300px;">Activity Category</div>
<div class="t" style="top:151.15px;font-size:14px;line-height:14px;color:#1f1e25;font-weight:bold;transform:scaleX(0.8679);transform-origin:0 0;left:451px;">Database</div>
<div class="t" style="top:151.15px;font-size:14px;line-height:14px;color:#1f1e25;font-weight:bold;transform:scaleX(0.8513);transform-origin:0 0;left:603px;">Elapsed Time</div>
<div class="t" style="top:151.15px;font-size:14px;line-height:14px;color:#1f1e25;font-weight:bold;transform:scaleX(0.8531);transform-origin:0 0;left:754px;">Run Count</div>
<div class="t" style="top:151.15px;font-size:14px;line-height:14px;color:#1f1e25;font-weight:bold;transform:scaleX(0.8645);transform-origin:0 0;left:906px;">Time Spent</div>
<div class="t" style="top:141.15px;font-size:14px;line-height:14px;color:#1f1e25;font-weight:bold;transform:scaleX(0.8657);transform-origin:100% 0;right:553.00px;text-align:right;">Total CPU</div>
<div class="t d" style="top:161.15px;font-size:14px;line-height:14px;color:#7a7984;transform:scaleX(0.9122);transform-origin:100% 0;right:553.00px;text-align:right;">Percent</div>
<div class="t" style="top:141.15px;font-size:14px;line-height:14px;color:#1f1e25;font-weight:bold;transform:scaleX(0.9130);transform-origin:100% 0;right:381.00px;text-align:right;">Memory</div>
<div class="t d" style="top:161.15px;font-size:14px;line-height:14px;color:#7a7984;transform:scaleX(0.9139);transform-origin:100% 0;right:381.00px;text-align:right;">Bytes</div>
<div class="t" style="top:141.15px;font-size:14px;line-height:14px;color:#1f1e25;font-weight:bold;transform:scaleX(0.9308);transform-origin:100% 0;right:229.00px;text-align:right;">Network</div>
<div class="t d" style="top:161.15px;font-size:14px;line-height:14px;color:#7a7984;transform:scaleX(0.8908);transform-origin:100% 0;right:229.00px;text-align:right;">Bytes / Sec</div>
<div class="t" style="top:141.15px;font-size:14px;line-height:14px;color:#1f1e25;font-weight:bold;transform:scaleX(0.8626);transform-origin:100% 0;right:76.00px;text-align:right;">Disk</div>
<div class="t d" style="top:161.15px;font-size:14px;line-height:14px;color:#7a7984;transform:scaleX(0.8908);transform-origin:100% 0;right:76.00px;text-align:right;">Bytes / Sec</div>
<div style="position:absolute;left:0;top:966px;width:1695px;height:1px;background:#dedde3"></div>
<div style="position:absolute;left:0;top:967px;width:1695px;height:33px;background:#f9f9f9"></div>
<svg style="position:absolute;left:10px;top:977px" width="16" height="16" viewBox="0 0 16 16"><rect x="0" y="0" width="16" height="16" rx="2.5" fill="#3e3d4a"/><path d="M2.7 4.3 L6 7.5 L2.7 10.7" fill="none" stroke="#fff" stroke-width="2"/><rect x="8" y="10.1" width="5.7" height="2.2" fill="#fff"/></svg>
<div class="t d" style="top:977.73px;font-size:14.5px;line-height:14.5px;color:#4b4a55;letter-spacing:-0.031px;left:46px;">Console</div>
<div class="t d" style="top:977.73px;font-size:14.5px;line-height:14.5px;color:#25242c;letter-spacing:0.240px;left:139px;">Connection</div>
<div class="t d" style="top:977.73px;font-size:14.5px;line-height:14.5px;color:#4b4a55;left:256px;">Log</div>
<div style="position:absolute;left:130px;top:999px;width:96px;height:1px;background:#6c06c4"></div>
<div style="position:absolute;left:1631px;top:921px;width:48px;height:48px;border-radius:50%;background:#9a20f4;box-shadow:0 2px 6px rgba(0,0,0,0.18)"></div>
<svg style="position:absolute;left:1645px;top:933px" width="20" height="22" viewBox="0 0 20 22"><path d="M6.3 8.3 A3.75 3.75 0 1 1 11.7 11.5 Q10 12.4 10 13.8" fill="none" stroke="#fff" stroke-width="2.7" stroke-linecap="round"/><circle cx="10" cy="17.9" r="2.1" fill="#fff"/></svg>
<svg style="position:absolute;left:1636px;top:981px" width="13" height="12" viewBox="0 0 13 12"><rect x="3.9" y="0.2" width="8.3" height="8.3" rx="1" fill="#3e3d4a"/><rect x="-0.3" y="2.2" width="10.3" height="10.5" rx="1.5" fill="#f9f9f9"/><rect x="0.7" y="3.2" width="8.3" height="8.5" rx="1" fill="#3e3d4a"/><rect x="2" y="4.5" width="5.8" height="1.5" fill="#fff"/></svg>
<svg style="position:absolute;left:1667px;top:981px" width="13" height="12" viewBox="0 0 13 12"><rect x="0.7" y="0.9" width="11.7" height="9.9" rx="1" fill="#3e3d4a"/><rect x="2" y="2.1" width="9.2" height="2.4" fill="#fff"/></svg>
</div>
</body></html>
